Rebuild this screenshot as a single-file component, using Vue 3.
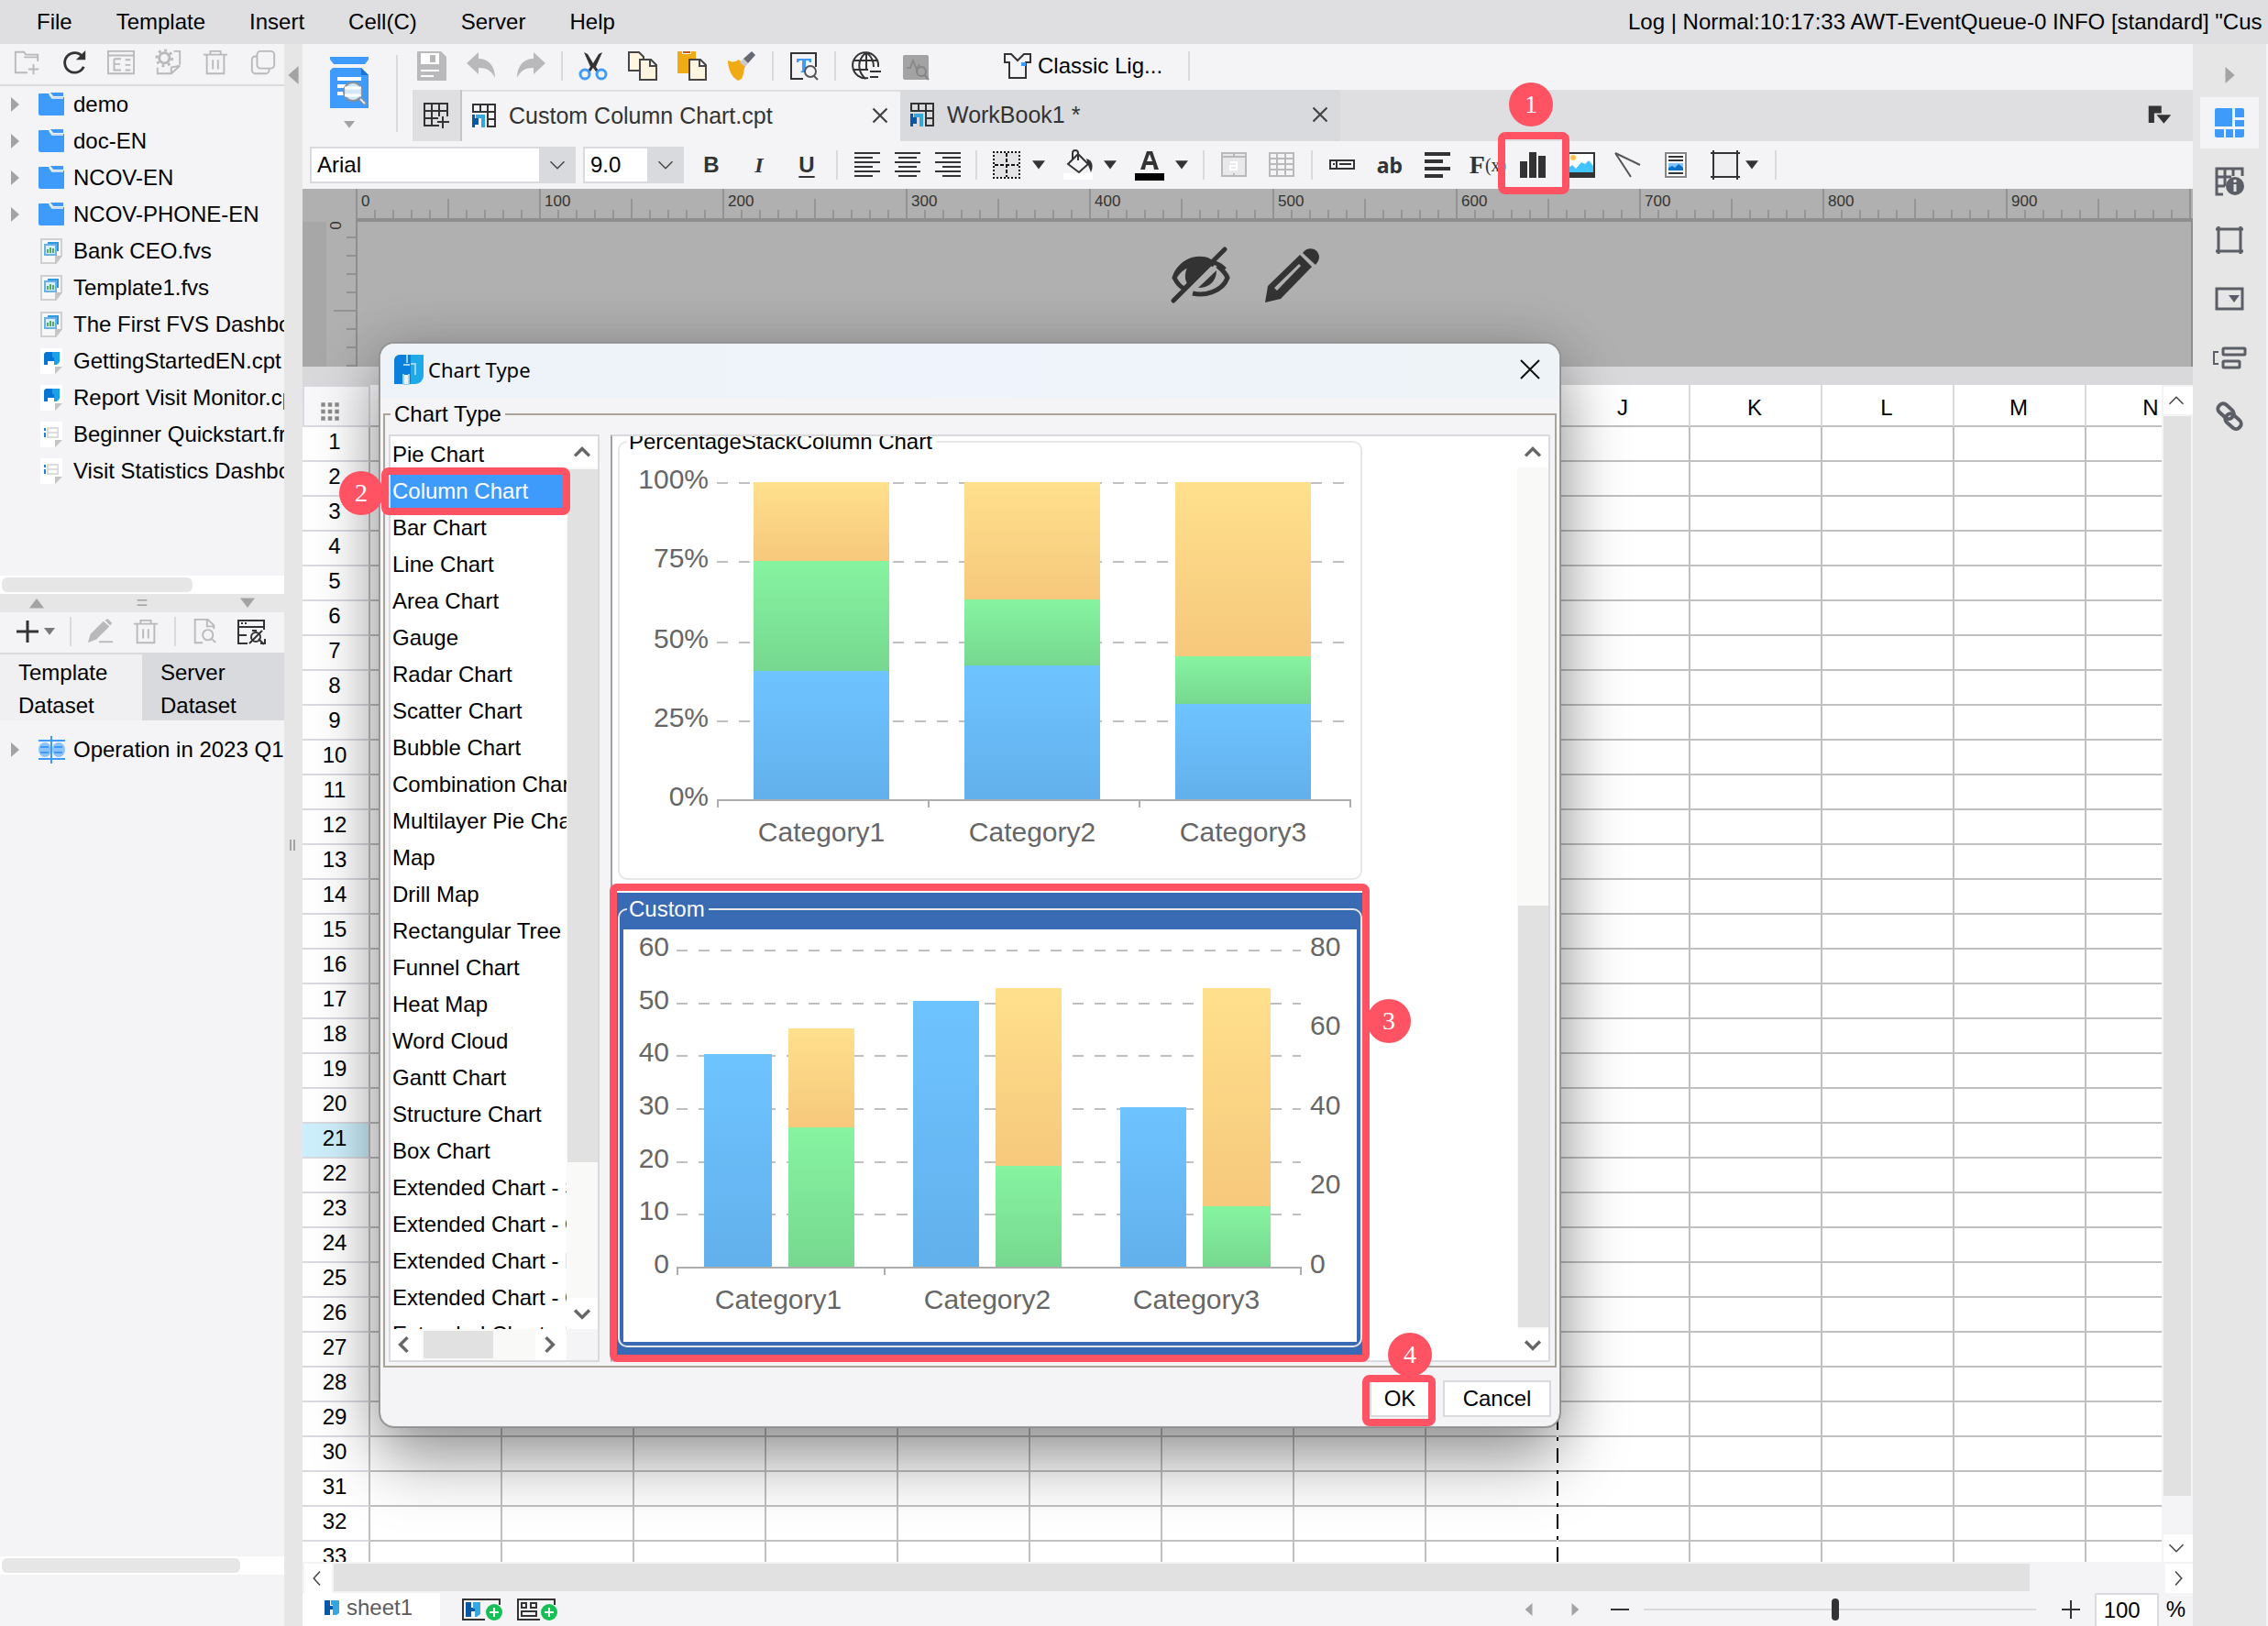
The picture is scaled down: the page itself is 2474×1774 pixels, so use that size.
<script setup>
import { h } from 'vue'

const D = '#333333'
const G = '#b9b9bb'
const S = '#5b5e66'

const glyphs = {
  newFolder: `<path d="M29 15V7H15l-2-3H3v24h14" fill="none" stroke="${G}" stroke-width="2"/><path d="M13 10h16M24 18v12M18 24h12" stroke="${G}" stroke-width="2"/>`,
  refresh: `<path d="M26 10A11.500 11.500 0 1 0 27 21" fill="none" stroke="${D}" stroke-width="3"/><path d="M29 2v11H18z" fill="${D}"/>`,
  panel: `<path d="M1 3h30v26H1zM1 8h30M8 12v13h8M8 18h7M8 12h8M21 13h6M21 19h6M21 25h6" fill="none" stroke="${G}" stroke-width="2"/>`,
  gearDoc: `<circle cx="11" cy="11" r="6" fill="none" stroke="${G}" stroke-width="3"/><circle cx="11" cy="11" r="9" fill="none" stroke="${G}" stroke-width="3" stroke-dasharray="3 4"/><path d="M22 3h7v16M3 22v7h16l10-9M19 29v-7l10-2" fill="none" stroke="${G}" stroke-width="2"/>`,
  trash: `<path d="M2 7h28M10 7V3h12v4M6 8v21h20V8M13 13v11M19 13v11" fill="none" stroke="${G}" stroke-width="2"/>`,
  copyGrey: `<rect x="9" y="3" width="20" height="20" rx="4" fill="none" stroke="${G}" stroke-width="2"/><path d="M9 9H7a4 4 0 0 0-4 4v12a4 4 0 0 0 4 4h12a4 4 0 0 0 4-4v-2" fill="none" stroke="${G}" stroke-width="2"/>`,
  folder: `<path d="M2 5a1 1 0 0 1 1-1h10l4 4h13v19a1 1 0 0 1-1 1H4a2 2 0 0 1-2-2z" fill="#3f9bfb"/><path d="M15 3h14v4H18z" fill="#3f9bfb"/><path d="M14 5l3 4h12" fill="none" stroke="#f4f4f7" stroke-width="1.500"/>`,
  fvs: `<path d="M5 3h22v18l-6 8H5z" fill="#f7f7f8" stroke="#cfcfcf" stroke-width="2"/><path d="M20 30v-9h8z" fill="#c4c4c4"/><path d="M12 6h12v10h-3V9h-9z" fill="#2f95dd"/><rect x="9" y="9" width="12" height="11" fill="#d9efff" stroke="#67b3e8" stroke-width="2"/><path d="M12 18v-4M15 18v-6M18 18v-5" stroke="#56a85a" stroke-width="2"/>`,
  cpt: `<path d="M4 2h24v20l-8 8H4z" fill="#fff"/><path d="M20 30v-8h8z" fill="#c4c4c4"/><path d="M8 8l2-2h7v6h-3v3h-2v5H8z" fill="#0674d2"/><path d="M17 6h8v11l-3 3h-3v-8h-2z" fill="#1ba1e6"/><path d="M12 12h7v4h-7z" fill="#0674d2"/>`,
  frm: `<path d="M4 2h24v20l-8 8H4z" fill="#fff"/><path d="M20 30v-8h8z" fill="#c4c4c4"/><path d="M9 9v3M9 14v5" stroke="#1a82dc" stroke-width="2"/><path d="M12 9h11v10H12zM12 14h11" fill="none" stroke="#dcdcdc" stroke-width="2"/>`,
  plus: `<path d="M16 4v24M4 16h24" stroke="${D}" stroke-width="3"/>`,
  pencilGrey: `<path d="M2 29l3-10L20 4l7 6-15 15zM22 3l3-2 5 5-2 3z" fill="${G}"/><path d="M15 28h16" stroke="${G}" stroke-width="2"/>`,
  docSearch: `<path d="M27 13V9l-7-7H5v27h9M19 3v7h8" fill="none" stroke="${G}" stroke-width="2"/><circle cx="20" cy="20" r="6" fill="none" stroke="${G}" stroke-width="2"/><path d="M24 24l5 5" stroke="${G}" stroke-width="2"/>`,
  dataset: `<path d="M12 29H2V4h28v10M2 11h28M2 20h9" fill="none" stroke="${D}" stroke-width="2"/><path d="M5 7h2M9 7h2" stroke="${D}" stroke-width="2"/><circle cx="21" cy="22" r="5" fill="none" stroke="${D}" stroke-width="2"/><path d="M14 29l14-14M24 24l6 6M17 15h5M26 29h5v-5" fill="none" stroke="${D}" stroke-width="2"/>`,
  table: `<ellipse cx="9" cy="16" rx="7" ry="8" fill="#8cc3fb"/><ellipse cx="24" cy="16" rx="7" ry="8" fill="#8cc3fb"/><path d="M2 6h29M2 26h29M16 1v30M4 13h9M4 19h9M19 13h9M19 19h9" stroke="#3f9bfb" stroke-width="2"/>`,
  save: `<path d="M1 0h25l6 6v25a1 1 0 0 1-1 1H1a1 1 0 0 1-1-1V1a1 1 0 0 1 1-1z" fill="${G}"/><path d="M4 2h20v12H4zM4 20h20v2H4zM4 26h14v2H4z" fill="#fff"/><path d="M14 4h6v8h-6z" fill="${G}"/>`,
  undo: `<path d="M13 1v7c11 0 18 8 18 21-4-8-9-11-18-11v7L0 13z" fill="${G}"/>`,
  redo: `<path d="M19 1v7C8 8 1 16 1 29c4-8 9-11 18-11v7l13-12z" fill="${G}"/>`,
  cut: `<path d="M6 1l4 2 6 10 6-10 4-2-7 16 3 4-3 1-3-4-3 4-3-1 3-4z" fill="${D}"/><circle cx="7" cy="25" r="5" fill="none" stroke="#3f9bfb" stroke-width="3"/><circle cx="25" cy="25" r="5" fill="none" stroke="#3f9bfb" stroke-width="3"/>`,
  copy: `<path d="M1 1h11l5 5v15H1z" fill="#fff5e0" stroke="#454545" stroke-width="2"/><path d="M13 9h12l6 6v16H13zM24 9v7h7" fill="#fff5e0" stroke="#454545" stroke-width="2"/>`,
  paste: `<path d="M0 0h20v24H0z" fill="#f0ab14"/><path d="M5 0h10v3H5z" fill="#fff"/><path d="M6 0h8v2H6z" fill="#c8571d"/><path d="M13 9h12l6 6v16H13zM24 9v7h7" fill="#fff5e0" stroke="#454545" stroke-width="2"/>`,
  brush: `<path d="M1 10c4 2 8 2 12-1l7 7c-2 5-2 11-4 14l-4 2C5 28 1 19 1 10z" fill="#f0ab14"/><path d="M14 12l4-4 5 5-3 4z" fill="#c9cad0"/><path d="M18 8l9-8 4 4-8 9z" fill="#666873"/>`,
  findText: `<path d="M15 30H2V2h27v15" fill="none" stroke="${D}" stroke-width="2"/><path d="M8 8h16v4h-2l-1-2h-3v11l2 2h-8l2-2V10h-3l-1 2H8z" fill="#3f9bfb"/><circle cx="23" cy="22" r="6" fill="#f4f4f7" stroke="#555" stroke-width="2"/><path d="M27 27l4 4" stroke="#555" stroke-width="2"/>`,
  globe: `<path d="M18 29A14 14 0 1 1 29 17" fill="none" stroke="${D}" stroke-width="2"/><path d="M15 2c-9 8-9 19 0 28M17 2c5 4 7 9 7 15M3 10h26M2 20h16M16 2v18M20 22h12M20 28h9" fill="none" stroke="${D}" stroke-width="2"/>`,
  monitor: `<rect x="2" y="4" width="28" height="27" rx="2" fill="#a3a3a3"/><path d="M6 18h4l3-8 4 10 3-6" fill="none" stroke="#8b8b8b" stroke-width="2"/><circle cx="22" cy="22" r="5" fill="none" stroke="#858585" stroke-width="2"/><path d="M25 25l5 6" stroke="#858585" stroke-width="2"/>`,
  shirt: `<path d="M2 3h7l7 7 7-7h7v9h-5v17H7V12H2z" fill="none" stroke="${D}" stroke-width="2"/><rect x="20" y="12" width="5" height="4" fill="#3f9bfb"/>`,
  gridAdd: `<path d="M19 27H3V3h25v14M3 11h25M3 19h15M11 3v24M19 3v14" fill="none" stroke="${D}" stroke-width="2"/><path d="M23 17v13M17 23h13" stroke="${D}" stroke-width="2"/>`,
  book: `<path d="M4 13V4h24v24h-9M4 12h24M12 4v8M20 4v24M20 20h8" fill="none" stroke="${D}" stroke-width="2"/><path d="M3 15h3v4h4v7H6v3H3z" fill="#0657a5"/><path d="M7 15h10v14h-4V19H7z" fill="#35a7e0"/>`,
  alignL: `<path d="M2 3h28M2 8h20M2 13h28M2 18h20M2 23h28M2 28h20" stroke="${D}" stroke-width="2"/>`,
  alignC: `<path d="M2 3h28M6 8h20M2 13h28M6 18h20M2 23h28M6 28h20" stroke="${D}" stroke-width="2"/>`,
  alignR: `<path d="M2 3h28M10 8h20M2 13h28M10 18h20M2 23h28M10 28h20" stroke="${D}" stroke-width="2"/>`,
  border: `<path d="M2 2h28v28H2z" fill="#e3e3e5"/><path d="M1 2h30M1 30h30M2 1v30M30 1v30" stroke="#111" stroke-width="2" stroke-dasharray="2 2"/><path d="M3 16h26M16 3v26" stroke="#111" stroke-width="2" stroke-dasharray="4 2"/>`,
  fill: `<path d="M0 25h32v7H0z" fill="#fff"/><path d="M5 15L16 4l11 11-10 9z" fill="none" stroke="${D}" stroke-width="2"/><path d="M10 10V3a3 3 0 0 1 6 0v8" fill="none" stroke="${D}" stroke-width="2"/><path d="M25 9c7 2 8 8 5 15l-3-8z" fill="${D}"/>`,
  fontColor: `<path d="M6 21L13 1h6l7 20h-5l-1-5h-8l-1 5zm7-9h6l-3-8z" fill="${D}"/><path d="M0 25h32v8H0z" fill="#000"/>`,
  merge: `<path d="M3 3h26v25H3z" fill="#e9e9eb" stroke="${G}" stroke-width="2"/><path d="M3 7h26M16 3v4M16 25v3" stroke="${G}" stroke-width="2"/><path d="M12 13h7v8h-7v-4h6" fill="none" stroke="#fff" stroke-width="2"/>`,
  unmerge: `<path d="M3 3h26v25H3zM3 9h26M3 15h26M3 21h26M11 3v25M20 3v25" fill="none" stroke="${G}" stroke-width="2"/>`,
  field: `<path d="M3 11h26v9H3zM10 11v9" fill="none" stroke="${D}" stroke-width="2"/><path d="M6 15h2M13 15h13" stroke="${D}" stroke-width="2"/>`,
  rich: `<path d="M2 4h28M2 12h20M2 20h28M2 28h20" stroke="${D}" stroke-width="4"/>`,
  chart: `<path d="M2 12h8v18H2zM12 2h8v28h-8zM22 6h8v24h-8z" fill="${D}"/>`,
  image: `<path d="M1 3h30v26H1z" fill="#fff" stroke="${D}" stroke-width="2"/><circle cx="8" cy="8" r="3" fill="#ffc44d"/><path d="M3 24v-5l4-3 4 4 6-7 4 2 4-4 5 6v7z" fill="#42c4ff"/><path d="M0 24h32v6H0z" fill="${D}"/>`,
  line: `<path d="M2 3l27 13M2 3l17 26" fill="none" stroke="#555" stroke-width="2"/>`,
  report: `<path d="M5 3h22v26H5z" fill="#fff" stroke="#858585" stroke-width="2"/><path d="M8 7h16M8 11h16M8 25h16" stroke="${D}" stroke-width="2"/><path d="M8 14h16v8H8z" fill="#7cc3ff"/><path d="M8 22v-3l4-2 3 2 4-4 5 4v3z" fill="#0a70c8"/>`,
  frame: `<path d="M3 3h26v26H3z" fill="#efeff2"/><path d="M0 3h32M0 29h32M3 0v32M29 0v32" stroke="${D}" stroke-width="2"/>`,
  windowList: `<path d="M2 4h16v9h-9v12H2z" fill="${D}"/><path d="M12 15h18l-9 11z" fill="${D}"/>`,
  eyeOff: `<path d="M3 33C12 15 44 8 58 24M46 19C36 6 10 12 3 33c3 6 6 10 11 12L42 17zM50 20c5 4 9 8 11 13-6 16-26 20-38 17" fill="none" stroke="${D}" stroke-width="5"/><path d="M17 22c8-7 18-9 26-6L18 41c-4-6-4-12-1-19zM49 25c0 12-8 19-20 19z" fill="${D}"/><path d="M2 58L58 2" stroke="${D}" stroke-width="5" stroke-linecap="round"/>`,
  pencil: `<path fill-rule="evenodd" d="M2 60l3-18L40 8l13 13-34 35zM15 47l26-27-2-2-27 26z" fill="${D}"/><path d="M43 6c6-8 17-5 18 4 0 4-2 6-4 9z" fill="${D}"/>`,
  layout: `<path d="M0 2a2 2 0 0 1 2-2h17v20H0zM22 0h8a2 2 0 0 1 2 2v8H22zM22 13h10v7H22zM0 23h10v9H2a2 2 0 0 1-2-2zM12 23h8v9h-8zM22 23h10v7a2 2 0 0 1-2 2h-8z" fill="#3f9bfb"/>`,
  cellInfo: `<path d="M9 30H2V2h28v8M2 11h16M2 21h9M11 3v18M20 3v7" fill="none" stroke="${S}" stroke-width="3"/><circle cx="22" cy="21" r="10" fill="${S}"/><path d="M22 14v3M22 19v8" stroke="#e6e6e6" stroke-width="3"/>`,
  cellBox: `<path d="M1 4h30M1 28h30M4 1v30M28 1v30" stroke="${S}" stroke-width="3"/>`,
  widget: `<path d="M2 5h28v22H2z" fill="none" stroke="${S}" stroke-width="3"/><path d="M15 12h12l-6 8z" fill="${S}"/>`,
  layers: `<rect x="9" y="6" width="24" height="7" rx="1" fill="none" stroke="${S}" stroke-width="3"/><rect x="9" y="20" width="18" height="7" rx="1" fill="none" stroke="${S}" stroke-width="3"/><path d="M4 10H-1v13H4" fill="none" stroke="${S}" stroke-width="2"/>`,
  link: `<g fill="none" stroke="${S}" stroke-width="4"><rect x="3" y="5" width="19" height="11" rx="5" transform="rotate(42 12 10)"/><rect x="11" y="16" width="19" height="11" rx="5" transform="rotate(42 20 21)"/></g>`,
  logo: `<path d="M6 0h14v32H0V6a6 6 0 0 1 6-6z" fill="#0a7fdc"/><path d="M18 0h14v23a9 9 0 0 1-9 9h-5z" fill="#1fa9e8"/><path d="M11 10h7v12h-7z" fill="#0a7fdc"/><path d="M14 0v9M10 11h7M10 21v11h6V21M18 10h5v12" fill="none" stroke="#9bd3f5" stroke-width="2"/><path d="M11 22h4v10h-4z" fill="#eef3fa"/>`,
  sheetLogo: `<path d="M0 0h12v12h8v8h-8v12H0z" fill="#0657a5"/><path d="M14 0h18v28l-6 4h-8V10h-4z" fill="#35a7e0"/>`,
  close: `<path d="M6 6l20 20M26 6L6 26" stroke="#111" stroke-width="2"/>`,
  tabClose: `<path d="M6 6l20 20M26 6L6 26" stroke="#444" stroke-width="3"/>`,
  chevD: `<path d="M6 11l10 10 10-10" fill="none" stroke="#444" stroke-width="2"/>`,
  chevU: `<path d="M6 21l10-10 10 10" fill="none" stroke="#444" stroke-width="2"/>`,
  chevL: `<path d="M20 6L11 16l9 10" fill="none" stroke="#444" stroke-width="2"/>`,
  chevR: `<path d="M12 6l9 10-9 10" fill="none" stroke="#444" stroke-width="2"/>`,
  boldD: `<path d="M7 12l9 9 9-9" fill="none" stroke="#666" stroke-width="4"/>`,
  boldU: `<path d="M7 21l9-9 9 9" fill="none" stroke="#666" stroke-width="4"/>`,
  boldL: `<path d="M20 7l-9 9 9 9" fill="none" stroke="#666" stroke-width="4"/>`,
  boldR: `<path d="M12 7l9 9-9 9" fill="none" stroke="#666" stroke-width="4"/>`,
  triD: `<path d="M0 5h32L16 26z" fill="currentColor"/>`,
  triU: `<path d="M0 27h32L16 6z" fill="currentColor"/>`,
  triL: `<path d="M24 0v32L6 16z" fill="currentColor"/>`,
  triR: `<path d="M8 0v32l18-16z" fill="currentColor"/>`,
  dots: `<path d="M3 3h6v6H3zM13 3h6v6h-6zM23 3h6v6h-6zM3 13h6v6H3zM13 13h6v6h-6zM23 13h6v6h-6zM3 23h6v6H3zM13 23h6v6h-6zM23 23h6v6h-6z" fill="#8c8c8c"/>`,
}

const Icon = (props) =>
  h('svg', {
    width: props.w || props.size || 32,
    height: props.hgt || props.size || 32,
    viewBox: props.box || '0 0 32 32',
    'aria-hidden': 'true',
    innerHTML: glyphs[props.name],
  })
Icon.props = ['name', 'size', 'w', 'hgt', 'box']

const menus = ['File', 'Template', 'Insert', 'Cell(C)', 'Server', 'Help']
const treeTools = [
  ['newFolder', 'New folder'], ['refresh', 'Refresh'], ['panel', 'Open panel'],
  ['gearDoc', 'Rename'], ['trash', 'Delete'], ['copyGrey', 'Copy path'],
]
const files = [
  { icon: 'folder', name: 'demo', open: true },
  { icon: 'folder', name: 'doc-EN', open: true },
  { icon: 'folder', name: 'NCOV-EN', open: true },
  { icon: 'folder', name: 'NCOV-PHONE-EN', open: true },
  { icon: 'fvs', name: 'Bank CEO.fvs' },
  { icon: 'fvs', name: 'Template1.fvs' },
  { icon: 'fvs', name: 'The First FVS Dashboard' },
  { icon: 'cpt', name: 'GettingStartedEN.cpt' },
  { icon: 'cpt', name: 'Report Visit Monitor.cpt' },
  { icon: 'frm', name: 'Beginner Quickstart.frm' },
  { icon: 'frm', name: 'Visit Statistics Dashboard' },
]
const chartTypes = [
  'Pie Chart', 'Column Chart', 'Bar Chart', 'Line Chart', 'Area Chart', 'Gauge', 'Radar Chart',
  'Scatter Chart', 'Bubble Chart', 'Combination Chart', 'Multilayer Pie Chart', 'Map', 'Drill Map',
  'Rectangular Tree Map', 'Funnel Chart', 'Heat Map', 'Word Cloud', 'Gantt Chart', 'Structure Chart',
  'Box Chart', 'Extended Chart - Series', 'Extended Chart - Others', 'Extended Chart - Display',
  'Extended Chart - Gauge', 'Extended Chart - Map',
]
const columns = 'ABCDEFGHIJKLMN'.split('')
const marks = [0, 100, 200, 300, 400, 500, 600, 700, 800, 900]
const railTools = [
  ['layout', 'Cell element'], ['cellInfo', 'Cell attributes'], ['cellBox', 'Floating element'],
  ['widget', 'Widget settings'], ['layers', 'Condition attributes'], ['link', 'Hyperlink'],
]

const percentTicks = [['100%', 23], ['75%', 109], ['50%', 197], ['25%', 283], ['0%', 369]]
const percentBars = [
  { x: 142, cuts: [22, 108, 228, 368] },
  { x: 372, cuts: [22, 150, 222, 368] },
  { x: 602, cuts: [22, 212, 264, 368] },
]
const stackFills = ['url(#gold)', 'url(#mint)', 'url(#sky)']
const leftTicks = [['60', 23], ['50', 81], ['40', 138], ['30', 196], ['20', 254], ['10', 311], ['0', 369]]
const rightTicks = [['80', 23], ['60', 109], ['40', 196], ['20', 282], ['0', 369]]
const customBars = [
  [88, 74, 136, 368, 'url(#sky)'], [180, 72, 108, 216, 'url(#gold)'], [180, 72, 216, 368, 'url(#mint)'],
  [316, 72, 78, 368, 'url(#sky)'], [406, 72, 64, 258, 'url(#gold)'], [406, 72, 258, 368, 'url(#mint)'],
  [542, 72, 194, 368, 'url(#sky)'], [632, 74, 64, 302, 'url(#gold)'], [632, 74, 302, 368, 'url(#mint)'],
]
</script>

<template>
  <div class="app">
    <header class="menubar">
      <nav>
        <button v-for="m in menus" :key="m" type="button">{{ m }}</button>
      </nav>
      <p class="log">Log | Normal:10:17:33 AWT-EventQueue-0 INFO [standard] "Cus</p>
    </header>

    <div class="body">
      <aside class="side">
        <div class="side-tools">
          <button v-for="t in treeTools" :key="t[0]" type="button" :aria-label="t[1]"><Icon :name="t[0]" :size="30" /></button>
        </div>
        <ul class="tree files">
          <li v-for="f in files" :key="f.name">
            <span class="twist"><Icon v-if="f.open" name="triR" :w="12" :hgt="18" box="4 0 24 32" /></span>
            <Icon :name="f.icon" />
            <span class="name">{{ f.name }}</span>
          </li>
        </ul>
        <div class="thin-scroll"><i class="short"></i></div>
        <div class="side-split">
          <Icon name="triU" :size="16" /><b>=</b><Icon name="triD" :size="16" />
        </div>
        <div class="data-tools">
          <button type="button" aria-label="Add dataset"><Icon name="plus" /><Icon name="triD" :size="12" /></button>
          <i class="sep"></i>
          <button type="button" aria-label="Edit"><Icon name="pencilGrey" :size="30" /></button>
          <button type="button" aria-label="Delete dataset"><Icon name="trash" :size="30" /></button>
          <i class="sep"></i>
          <button type="button" aria-label="Preview dataset"><Icon name="docSearch" :size="30" /></button>
          <button type="button" aria-label="Connections"><Icon name="dataset" /></button>
        </div>
        <div class="data-tabs">
          <button type="button" class="on">Template Dataset</button>
          <button type="button">Server Dataset</button>
        </div>
        <ul class="tree datasets">
          <li>
            <span class="twist"><Icon name="triR" :w="12" :hgt="18" box="4 0 24 32" /></span>
            <Icon name="table" />
            <span class="name">Operation in 2023 Q1</span>
          </li>
        </ul>
        <div class="thin-scroll"><i></i></div>
        <div class="side-foot"></div>
      </aside>

      <div class="splitter"><Icon name="triL" class="fold" :w="16" :hgt="20" box="6 0 18 32" /><span class="grip"></span></div>

      <main class="main">
        <div class="top">
          <button type="button" class="preview" aria-label="Preview">
            <svg width="42" height="56" viewBox="0 0 42 56" aria-hidden="true">
              <path d="M0 0h42v3l-4 5H4L0 3z" fill="#3f9bfb" />
              <path d="M3 12h31l8 8v36H0V15z" fill="#3f9bfb" />
              <path d="M34 12l8 8h-8z" fill="#1a73d9" />
              <path d="M8 22h26v4H8zM8 30h9v4H8zM8 38h9v4H8z" fill="#fff" />
              <circle cx="25" cy="38" r="10" fill="#d3e8fd" stroke="#8a9199" stroke-width="2" />
              <path d="M16 34h18M16 42h18" stroke="#fff" stroke-width="3" />
              <path d="M32 45l7 7" stroke="#8a9199" stroke-width="4" />
              <path d="M33 46l5 5" stroke="#e8e8e8" stroke-width="2" />
            </svg>
            <Icon name="triD" :size="12" />
          </button>
          <div class="bars">
            <div class="toolbar">
              <button type="button" aria-label="Save"><Icon name="save" /></button>
              <button type="button" aria-label="Undo"><Icon name="undo" /></button>
              <button type="button" aria-label="Redo"><Icon name="redo" /></button>
              <i class="sep"></i>
              <button type="button" aria-label="Cut"><Icon name="cut" /></button>
              <button type="button" aria-label="Copy"><Icon name="copy" /></button>
              <button type="button" aria-label="Paste"><Icon name="paste" /></button>
              <button type="button" aria-label="Format brush"><Icon name="brush" /></button>
              <i class="sep"></i>
              <button type="button" aria-label="Find"><Icon name="findText" /></button>
              <i class="sep"></i>
              <button type="button" aria-label="Internationalization"><Icon name="globe" /></button>
              <button type="button" aria-label="Performance"><Icon name="monitor" /></button>
              <button type="button" class="theme"><Icon name="shirt" />Classic Lig...</button>
              <i class="sep"></i>
            </div>
            <div class="tabs">
              <button type="button" class="add" aria-label="New workbook"><Icon name="gridAdd" /></button>
              <button type="button" class="tab on"><Icon name="book" /><span>Custom Column Chart.cpt</span><Icon name="tabClose" :size="24" /></button>
              <button type="button" class="tab"><Icon name="book" /><span>WorkBook1 *</span><Icon name="tabClose" :size="24" /></button>
              <button type="button" class="more" aria-label="Open windows"><Icon name="windowList" :size="28" /></button>
            </div>
          </div>
        </div>

        <div class="format">
          <label class="combo font"><select aria-label="Font family"><option>Arial</option></select><Icon name="chevD" :size="24" /></label>
          <label class="combo size"><select aria-label="Font size"><option>9.0</option></select><Icon name="chevD" :size="24" /></label>
          <button type="button" class="b">B</button>
          <button type="button" class="i">I</button>
          <button type="button" class="u">U</button>
          <i class="sep"></i>
          <span class="aligns">
            <button type="button" aria-label="Align left"><Icon name="alignL" /></button>
            <button type="button" aria-label="Align center"><Icon name="alignC" /></button>
            <button type="button" aria-label="Align right"><Icon name="alignR" /></button>
          </span>
          <i class="sep"></i>
          <button type="button" class="split" aria-label="Borders"><Icon name="border" /><Icon name="triD" :size="14" /></button>
          <button type="button" class="split" aria-label="Fill color"><Icon name="fill" /><Icon name="triD" :size="14" /></button>
          <button type="button" class="split" aria-label="Font color"><Icon name="fontColor" /><Icon name="triD" :size="14" /></button>
          <i class="sep"></i>
          <button type="button" aria-label="Merge cells"><Icon name="merge" /></button>
          <button type="button" aria-label="Unmerge cells"><Icon name="unmerge" /></button>
          <i class="sep"></i>
          <button type="button" aria-label="Data column"><Icon name="field" /></button>
          <button type="button" class="ab">ab</button>
          <button type="button" aria-label="Rich text"><Icon name="rich" /></button>
          <button type="button" class="fx">F<small>(x)</small></button>
          <button type="button" class="insert-chart" aria-label="Insert chart">
            <Icon name="chart" />
            <span class="ring"></span><span class="badge">1</span>
          </button>
          <button type="button" aria-label="Insert image"><Icon name="image" /></button>
          <button type="button" aria-label="Slope line"><Icon name="line" /></button>
          <button type="button" aria-label="Sub report"><Icon name="report" /></button>
          <button type="button" class="split close-set" aria-label="Floating frame"><Icon name="frame" /><Icon name="triD" :size="14" /></button>
          <i class="sep"></i>
        </div>

        <section class="canvas">
          <div class="ruler">
            <span v-for="m in marks" :key="m">{{ m }}</span>
          </div>
          <div class="stage">
            <div class="vruler"><span>0</span></div>
            <div class="stage-tools">
              <button type="button" aria-label="Hide parameter pane"><Icon name="eyeOff" :size="64" box="0 0 64 64" /></button>
              <button type="button" aria-label="Edit parameter pane"><Icon name="pencil" :size="64" box="0 0 64 64" /></button>
            </div>
          </div>
        </section>

        <section class="sheet">
          <div class="cells">
            <table>
              <thead>
                <tr>
                  <th class="corner"><Icon name="dots" :size="24" /></th>
                  <th v-for="c in columns" :key="c">{{ c }}</th>
                </tr>
              </thead>
              <tbody>
                <tr v-for="r in 33" :key="r" :class="{ current: r === 21 }">
                  <th>{{ r }}</th>
                  <td v-for="c in columns" :key="c"></td>
                </tr>
              </tbody>
            </table>
            <div class="page-break"></div>
          </div>
          <div class="vbar">
            <button type="button" aria-label="Scroll up"><Icon name="chevU" :size="24" /></button>
            <i></i>
            <button type="button" aria-label="Scroll down"><Icon name="chevD" :size="24" /></button>
          </div>
        </section>
        <div class="hbar">
          <button type="button" aria-label="Scroll left"><Icon name="chevL" :size="24" /></button>
          <i></i>
          <button type="button" aria-label="Scroll right"><Icon name="chevR" :size="24" /></button>
        </div>

        <footer class="status">
          <button type="button" class="sheet-tab"><Icon name="sheetLogo" :size="16" />sheet1</button>
          <button type="button" class="sheet-add" aria-label="Add report sheet">
            <svg width="44" height="26" viewBox="0 0 44 26" aria-hidden="true">
              <path d="M41 8V2H1v22h24" fill="none" stroke="#333" stroke-width="2" />
              <path d="M4 5h6v6h4v4h-4v6H4z" fill="#0657a5" /><path d="M12 5h8v13l-4 3h-2v-9h-2z" fill="#35a7e0" />
              <circle cx="35" cy="16" r="9" fill="#15c155" /><path d="M35 11v10M30 16h10" stroke="#fff" stroke-width="2" />
            </svg>
          </button>
          <button type="button" class="sheet-add" aria-label="Add form sheet">
            <svg width="44" height="26" viewBox="0 0 44 26" aria-hidden="true">
              <path d="M41 8V2H1v22h24" fill="none" stroke="#333" stroke-width="2" />
              <path d="M5 6h5v5H5zM15 6h6v5h-6zM5 15h16v5H5z" fill="none" stroke="#333" stroke-width="2" />
              <circle cx="35" cy="16" r="9" fill="#15c155" /><path d="M35 11v10M30 16h10" stroke="#fff" stroke-width="2" />
            </svg>
          </button>
          <div class="zoomer">
            <span class="steps">
              <button type="button" aria-label="Previous sheet"><Icon name="triL" :size="14" /></button>
              <button type="button" aria-label="Next sheet"><Icon name="triR" :size="14" /></button>
            </span>
            <button type="button" aria-label="Zoom out"><svg width="24" height="24" viewBox="0 0 24 24" aria-hidden="true"><path d="M2 12h20" stroke="#333" stroke-width="2" /></svg></button>
            <input type="range" min="0" max="100" value="49" aria-label="Zoom" />
            <button type="button" aria-label="Zoom in"><svg width="24" height="24" viewBox="0 0 24 24" aria-hidden="true"><path d="M2 12h20M12 2v20" stroke="#333" stroke-width="2" /></svg></button>
            <label class="pct"><input type="text" value="100" />%</label>
          </div>
        </footer>
      </main>

      <aside class="rail">
        <button type="button" class="unfold" aria-label="Expand panel"><Icon name="triR" :size="18" /></button>
        <button v-for="(t, n) in railTools" :key="t[0]" type="button" :class="{ on: n === 0 }" :aria-label="t[1]"><Icon :name="t[0]" /></button>
      </aside>
    </div>

    <div class="dialog" role="dialog" aria-labelledby="dialog-title">
      <div class="title">
        <Icon name="logo" />
        <h1 id="dialog-title">Chart Type</h1>
        <button type="button" aria-label="Close"><Icon name="close" /></button>
      </div>
      <fieldset class="group">
        <legend>Chart Type</legend>
        <div class="panes">
          <div class="types">
            <ul role="listbox" aria-label="Chart types">
              <li v-for="t in chartTypes" :key="t" role="option" :class="{ on: t === 'Column Chart' }">{{ t }}</li>
            </ul>
            <div class="sbar">
              <button type="button" aria-label="Up"><Icon name="boldU" :size="28" /></button>
              <i></i>
              <button type="button" aria-label="Down"><Icon name="boldD" :size="28" /></button>
            </div>
            <div class="sbar flat">
              <button type="button" aria-label="Left"><Icon name="boldL" :size="28" /></button>
              <i></i>
              <button type="button" aria-label="Right"><Icon name="boldR" :size="28" /></button>
            </div>
            <span class="ring"></span><span class="badge">2</span>
          </div>

          <div class="previews">
            <div class="cards">
              <div class="card">
                <fieldset>
                  <legend>PercentageStackColumn Chart</legend>
                  <svg class="chart" width="800" height="450" viewBox="0 0 800 450">
                    <defs>
                      <linearGradient id="gold" x2="0" y2="1"><stop stop-color="#ffe08c" /><stop offset="1" stop-color="#f6c87c" /></linearGradient>
                      <linearGradient id="mint" x2="0" y2="1"><stop stop-color="#86f4a1" /><stop offset="1" stop-color="#76d88f" /></linearGradient>
                      <linearGradient id="sky" x2="0" y2="1"><stop stop-color="#6ec4ff" /><stop offset="1" stop-color="#62b0ec" /></linearGradient>
                    </defs>
                    <g v-for="t in percentTicks" :key="t[0]">
                      <path v-if="t[1] < 369" class="dash" :d="`M102 ${t[1]}H790`" />
                      <text x="93" :y="t[1] + 6" text-anchor="end">{{ t[0] }}</text>
                    </g>
                    <g v-for="b in percentBars" :key="b.x">
                      <rect v-for="(f, n) in stackFills" :key="f" :x="b.x" width="148" :y="b.cuts[n]" :height="b.cuts[n + 1] - b.cuts[n]" :fill="f" />
                    </g>
                    <path class="axis" d="M103 377V369H793V377M333 369V377M563 369V377" />
                    <text x="216" y="414" text-anchor="middle">Category1</text>
                    <text x="446" y="414" text-anchor="middle">Category2</text>
                    <text x="676" y="414" text-anchor="middle">Category3</text>
                  </svg>
                </fieldset>
              </div>
              <div class="card on">
                <fieldset>
                  <legend>Custom</legend>
                  <svg class="chart" width="800" height="450" viewBox="0 0 800 450">
                    <g v-for="t in leftTicks" :key="t[0]">
                      <path v-if="t[1] < 369" class="dash" :d="`M58 ${t[1]}H739`" />
                      <text x="50" :y="t[1] + 6" text-anchor="end">{{ t[0] }}</text>
                    </g>
                    <text v-for="t in rightTicks" :key="t[0]" x="749" :y="t[1] + 6">{{ t[0] }}</text>
                    <rect v-for="(b, n) in customBars" :key="n" :x="b[0]" :width="b[1]" :y="b[2]" :height="b[3] - b[2]" :fill="b[4]" />
                    <path class="axis" d="M59 377V369H739V377M285 369V377" />
                    <text x="169" y="414" text-anchor="middle">Category1</text>
                    <text x="397" y="414" text-anchor="middle">Category2</text>
                    <text x="625" y="414" text-anchor="middle">Category3</text>
                  </svg>
                </fieldset>
                <span class="ring"></span><span class="badge">3</span>
              </div>
            </div>
            <div class="sbar low">
              <button type="button" aria-label="Up"><Icon name="boldU" :size="28" /></button>
              <i></i>
              <button type="button" aria-label="Down"><Icon name="boldD" :size="28" /></button>
            </div>
          </div>
        </div>
      </fieldset>
      <div class="actions">
        <button type="button" class="ok">OK<span class="ring"></span><span class="badge">4</span></button>
        <button type="button" class="cancel">Cancel</button>
      </div>
    </div>
  </div>
</template>

<style>
body { margin: 0; overflow: hidden; }
</style>

<style scoped>
.app, .app * { box-sizing: border-box; }
.app { position: relative; display: flex; flex-direction: column; height: 100vh; overflow: hidden; background: #f4f4f7; color: #000; font: 24px/28px "Liberation Sans", Arial, sans-serif; }
.app ul { list-style: none; margin: 0; padding: 0; }
.app button { font: inherit; color: inherit; border: 0; background: none; padding: 0; margin: 0; display: flex; align-items: center; justify-content: center; white-space: nowrap; }
.app svg { display: block; flex: none; overflow: visible; }
.sep { flex: none; width: 2px; height: 32px; margin: 0 6px; background: #dadadd; }

.menubar { display: flex; align-items: center; height: 48px; background: #dfdfe1; flex: none; }
.menubar nav { display: flex; padding-left: 16px; }
.app .menubar button { padding: 0 24px; }
.log { margin: 0 0 0 auto; width: 698px; overflow: hidden; white-space: nowrap; }

.body { flex: 1; display: flex; min-height: 0; }

.side { width: 310px; flex: none; display: flex; flex-direction: column; }
.side-tools { display: flex; align-items: center; justify-content: space-between; height: 46px; padding: 0 8px 4px 14px; border-bottom: 2px solid #dadadd; flex: none; }
.tree { overflow: hidden; }
.files { height: 534px; flex: none; }
.app .datasets { flex: 1; padding-top: 12px; }
.tree li { display: flex; align-items: center; height: 40px; white-space: nowrap; }
.twist { width: 40px; flex: none; padding-left: 10px; color: #a3a3a3; }
.name { flex: 1; min-width: 0; overflow: hidden; padding-left: 8px; }
.thin-scroll { height: 20px; background: #fff; padding: 2px; flex: none; }
.thin-scroll i { display: block; width: 260px; height: 16px; border-radius: 6px; background: #e6e6e6; }
.thin-scroll i.short { width: 208px; }
.side-split { display: flex; align-items: center; justify-content: space-between; height: 20px; padding: 0 32px; background: #e6e6e6; color: #a3a3a3; flex: none; }
.side-split b { font-weight: 400; font-size: 22px; line-height: 20px; }
.data-tools { display: flex; align-items: center; gap: 20px; height: 46px; padding: 0 14px 2px; border-bottom: 2px solid #dadadd; flex: none; }
.data-tools .sep { margin: 0 -4px; }
.data-tools svg + svg { margin-left: 2px; color: #777; }
.data-tabs { display: flex; height: 72px; flex: none; }
.app .data-tabs button { flex: 1; justify-content: flex-start; padding: 4px 20px 0; white-space: normal; text-align: left; line-height: 36px; background: #d9dadd; }
.app .data-tabs button.on { background: #f0f0f2; }
.side-foot { height: 56px; flex: none; }

.splitter { position: relative; width: 20px; flex: none; background: #e6e6e6; color: #a3a3a3; }
.fold { position: absolute; left: 2px; top: 24px; }
.grip { position: absolute; left: 6px; top: 868px; width: 6px; height: 12px; border: solid #a3a3a3; border-width: 0 2px; }

.main { flex: 1; min-width: 0; display: flex; flex-direction: column; }
.top { display: flex; height: 106px; flex: none; }
.app .preview { flex-direction: column; justify-content: flex-start; gap: 12px; width: 104px; height: 84px; margin: 12px 16px 0 0; padding-top: 2px; border-right: 2px solid #dadadd; color: #a3a3a3; }
.bars { flex: 1; min-width: 0; }
.toolbar { display: flex; align-items: center; height: 50px; margin-left: -6px; padding-bottom: 2px; }
.app .toolbar button { width: 54px; height: 32px; }
.app .toolbar .theme { width: auto; gap: 6px; margin: 0 22px 0 68px; }
.tabs { display: flex; align-items: stretch; height: 56px; background: #dfdfe1; }
.app .add { width: 54px; border-right: 2px solid #c4c5c8; }
.app .tab { width: 480px; padding: 0 10px 2px 8px; color: #333; font-size: 25px; background: #d9dadd; }
.app .tab.on { width: 478px; background: #f4f4f7; border-top: 2px solid #dfdfe1; }
.tab span { flex: 1; padding-left: 11px; text-align: left; }
.app .more { margin-left: auto; width: 72px; }

.format { display: flex; align-items: center; height: 52px; padding-left: 8px; flex: none; }
.app .format button { position: relative; width: 52px; height: 40px; flex: none; color: #333; }
.combo { position: relative; display: block; margin-right: 8px; }
.combo select { appearance: none; width: 100%; height: 40px; padding: 0 6px; font: inherit; color: #000; border: 2px solid #d9dadd; border-radius: 0; background: linear-gradient(to left, #d9dadd 38px, #fff 38px); }
.combo svg { position: absolute; right: 8px; top: 8px; pointer-events: none; }
.font { width: 290px; }
.size { width: 110px; margin-right: 4px; }
.app .format .b { font-weight: 700; }
.app .format .i { font: italic 700 24px/28px "Liberation Serif", serif; }
.app .format .u { text-decoration: underline; text-underline-offset: 4px; font-weight: 700; }
.aligns { display: flex; padding: 0 2px 0 4px; }
.app .format .aligns button { width: 44px; }
.app .format .split { width: 78px; gap: 12px; }
.app .format .close-set { width: 76px; gap: 6px; }
.app .format .ab { font: 700 23px/28px "Noto Sans", sans-serif; }
.app .format .fx { padding-left: 6px; font: 700 28px/28px "Liberation Serif", serif; }
.fx small { font-size: 20px; font-weight: 400; }

.ring { position: absolute; border: 8px solid #ff5364; border-radius: 8px; z-index: 1; pointer-events: none; }
.badge { position: absolute; z-index: 2; width: 48px; height: 48px; border-radius: 50%; background: #ff5364; color: #fff; font: 28px/48px "Liberation Serif", serif; text-align: center; }
.insert-chart .ring { left: -12px; top: -16px; width: 78px; height: 68px; }
.insert-chart .badge { left: 0; top: -70px; }

.canvas { display: flex; flex-direction: column; height: 214px; background: #b0b0b0; border-bottom: 20px solid #d9d9db; flex: none; }
.ruler { display: flex; height: 36px; margin-left: 58px; overflow: hidden; border-bottom: 4px solid #8e8e8e; flex: none;
  background:
    repeating-linear-gradient(to right, #929292 0 2px, transparent 2px 200px),
    repeating-linear-gradient(to right, #959595 0 2px, transparent 2px 100px) 0 100% / 100% 21px no-repeat,
    repeating-linear-gradient(to right, #959595 0 2px, transparent 2px 20px) 0 100% / 100% 9px no-repeat; }
.ruler span { width: 200px; flex: none; padding-left: 6px; font-size: 17px; line-height: 28px; color: #333; }
.stage { position: relative; flex: 1; display: flex; align-items: center; justify-content: center; border-right: 2px solid #8e8e8e; padding-bottom: 38px; }
.vruler { position: absolute; left: 0; top: 0; bottom: 0; width: 60px; border-right: 2px solid #8e8e8e;
  background:
    repeating-linear-gradient(to bottom, transparent 0 16px, #929292 16px 18px, transparent 18px 20px) 100% 0 / 10px 100% no-repeat,
    linear-gradient(#929292, #929292) 100% 96px / 24px 2px no-repeat,
    linear-gradient(to right, #a7a7a7 26px, #b0b0b0 26px); }
.vruler span { position: absolute; left: 32px; top: -6px; font-size: 17px; line-height: 20px; color: #333; transform: rotate(-90deg); }
.stage-tools { display: flex; gap: 36px; }

.sheet { flex: 1; min-height: 0; display: flex; }
.cells { position: relative; flex: 1; min-width: 0; overflow: hidden; background: #fff; }
.cells table { border-collapse: separate; border-spacing: 0; table-layout: fixed; width: 2090px; }
.cells th, .cells td { width: 144px; height: 38px; padding: 0; border: solid #c0c0c0; border-width: 0 2px 2px 0; font-weight: 400; line-height: 28px; }
.cells thead th { height: 46px; padding: 6px 2px 0 0; border-right-color: #d9d9df; }
.cells th:first-child { width: 74px; padding: 0 2px 4px 0; border-right-color: #c0c0c0; border-bottom-color: #d9d9e0; text-align: center; }
.cells thead th.corner { padding: 12px 0 0 16px; border: 2px solid #d9d9e0; background: #f8f8fa; }
.cells .current th { background: #cdeffb; }
.page-break { position: absolute; left: 1368px; top: 0; bottom: 0; width: 2px; background: repeating-linear-gradient(to bottom, #000 0 16px, #fff 16px 24px, #000 24px 28px, #fff 28px 36px); background-position-y: 8px; }
.vbar { width: 34px; flex: none; display: flex; flex-direction: column; padding: 2px 0 0 2px; }
.vbar button { height: 30px; padding-right: 4px; background: #fff; flex: none; }
.vbar i { flex: 1; margin: 2px 2px 42px 0; background: #e1e1e1; }
.hbar { display: flex; height: 34px; padding: 2px 0 0 2px; flex: none; }
.app .hbar button { width: 30px; padding-right: 2px; background: #fff; flex: none; }
.hbar i { flex: 1; margin: 0 148px 2px 2px; background: #e1e1e1; }

.status { display: flex; align-items: center; height: 36px; flex: none; }
.app .sheet-tab { width: 150px; height: 36px; margin-right: 24px; padding: 0 6px 4px 0; gap: 8px; background: #fff; color: #5c5c5c; }
.app .sheet-add { margin-right: 16px; }
.zoomer { display: flex; align-items: center; margin-left: auto; padding-right: 8px; }
.steps { display: flex; margin-right: 12px; }
.app .steps button { width: 50px; color: #a3a3a3; }
.zoomer input[type="range"] { appearance: none; width: 428px; height: 28px; margin: 0 26px 0 14px; background: linear-gradient(#dadadd, #dadadd) 0 50% / 100% 2px no-repeat; }
.zoomer input[type="range"]::-webkit-slider-thumb { appearance: none; width: 8px; height: 24px; border-radius: 4px; background: #333; }
.pct { display: flex; align-items: center; margin-left: 14px; gap: 8px; }
.pct input { width: 70px; height: 36px; padding: 0 8px; font: inherit; border: 2px solid #d9dadd; border-bottom: 0; background: #fff; }

.rail { width: 82px; flex: none; display: flex; flex-direction: column; align-items: center; gap: 8px; background: #e6e6e6; border-right: 2px solid #f4f4f7; }
.app .rail button { width: 64px; height: 56px; }
.app .rail .on { background: #f4f4f7; }
.app .rail .unfold { height: 50px; padding-top: 18px; color: #a3a3a3; }

.dialog { position: absolute; left: 414px; top: 374px; width: 1288px; z-index: 5; border: 1px solid #a0a0a0; border-radius: 16px; background: #f4f4f7; box-shadow: 0 0 0 1px #8e8e8e, 0 36px 72px rgba(0, 0, 0, .38), 0 0 60px rgba(0, 0, 0, .14); }
.title { display: flex; align-items: center; height: 59px; padding: 0 16px 4px 15px; border-radius: 15px 15px 0 0; background: linear-gradient(to right, #edf3f8, #eff3fb 50%, #edf3f7); }
.title h1 { flex: 1; margin: 0; padding-left: 5px; font: 22px/28px "Noto Sans", "Open Sans", sans-serif; }
fieldset { min-width: 0; margin: 0; }
.group { margin: 4px 3px 0; padding: 8px 5px 4px 4px; border: 2px solid #a8a498; }
.group > legend { margin-left: 2px; padding: 0 4px; line-height: 28px; }
.panes { display: flex; gap: 12px; height: 1012px; }
.types { position: relative; width: 230px; flex: none; display: grid; grid-template: 1fr 34px / 1fr 34px; border: 2px solid #d9dadd; }
.types ul { min-height: 0; overflow: hidden; background: #fff; }
.types li { height: 40px; padding: 6px 2px; line-height: 28px; white-space: nowrap; }
.types .on { background: #3f9bfb; color: #fff; }
.types .ring { left: -10px; top: 34px; width: 206px; height: 52px; }
.types .badge { left: -56px; top: 38px; }
.sbar { display: flex; flex-direction: column; background: #f9f9f7; }
.sbar button { height: 34px; width: 34px; background: #fff; flex: none; }
.sbar i { flex: 1; margin: 2px 0 148px 1px; background: #e1e1e1; }
.sbar.flat { flex-direction: row; }
.app .sbar.flat button { padding-right: 4px; }
.sbar.flat i { margin: 2px 46px 2px 2px; }
.sbar.low i { margin: 478px 0 2px 1px; }
.previews { flex: 1; min-width: 0; display: flex; border: 2px solid #d9dadd; border-left-color: #a0a1a5; background: #fff; }
.cards { flex: 1; min-width: 0; min-height: 0; padding-left: 4px; clip-path: inset(0 -20px -20px -20px); }
.card { position: relative; width: 814px; padding: 4px 0 8px 2px; margin-bottom: 6px; }
.card:first-child { margin-top: -12px; }
.card fieldset { padding: 8px 4px 4px; border: 2px solid #e7e7e7; border-radius: 10px; }
.card legend { margin-left: 4px; padding: 0 4px 0 2px; line-height: 28px; }
.card.on { background: #396ab4; }
.card.on legend { color: #fff; }
.card .ring { left: -7px; top: -10px; right: -8px; bottom: -8px; }
.card .badge { left: 819px; top: 116px; }
.chart { background: #fff; }
.chart text { font-size: 30px; fill: #666; }
.dash { fill: none; stroke: #c0c0c0; stroke-width: 2; stroke-dasharray: 12 12; }
.axis { fill: none; stroke: #adadad; stroke-width: 2; }
.actions { display: flex; justify-content: flex-end; gap: 14px; padding: 14px 9px 10px; }
.app .actions button { position: relative; height: 40px; background: #fff; border: 2px solid #d9dadd; }
.app .ok { width: 66px; }
.app .cancel { width: 118px; }
.ok .ring { left: -10px; top: -8px; width: 80px; height: 56px; }
.ok .badge { left: 18px; top: -54px; }
</style>
